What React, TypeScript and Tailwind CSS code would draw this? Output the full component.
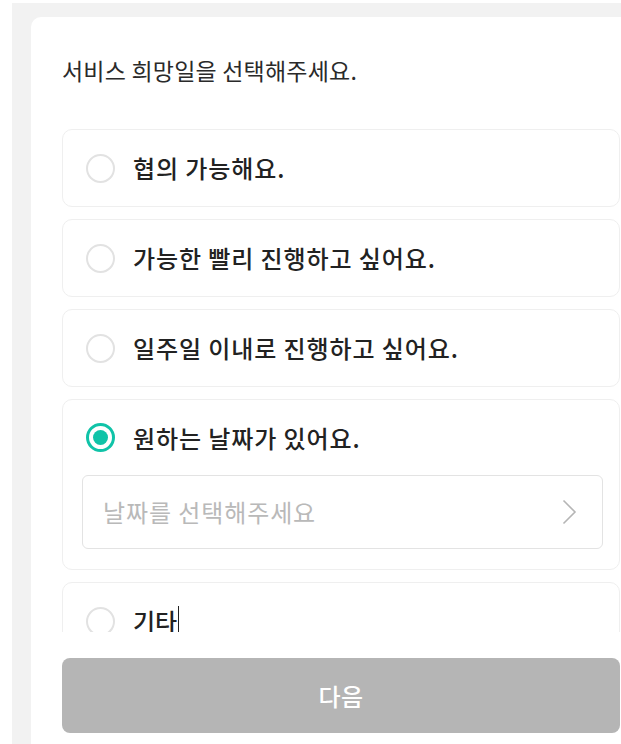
import React from "react";

const font = { fontFamily: '"Noto Sans CJK KR", "Noto Sans", sans-serif' };

function Radio({ checked }: { checked?: boolean }) {
  if (checked) {
    return (
      <span className="flex h-[29px] w-[29px] shrink-0 items-center justify-center rounded-full border-[3px] border-[#10c3a8]">
        <span className="h-[15px] w-[15px] rounded-full bg-[#10c3a8]" />
      </span>
    );
  }
  return <span className="h-[29px] w-[29px] shrink-0 rounded-full border-2 border-[#e2e2e2]" />;
}

function Option({ label }: { label: string }) {
  return (
    <div className="flex h-[78px] shrink-0 items-center rounded-[10px] border border-[#efefef] pl-[23px]">
      <Radio />
      <span className="ml-[18px] text-[24px] font-medium leading-[32px] tracking-[0.9px] text-[#222]">{label}</span>
    </div>
  );
}

export default function App() {
  return (
    <div className="relative h-[744px] w-[621px] overflow-hidden bg-white" style={font}>
      <div className="ml-[12px] mt-[3px] h-[741px] w-[700px] bg-[#f2f2f2] pl-[19px] pt-[14px]">
        <div className="flex h-full w-[620px] flex-col rounded-tl-[10px] bg-white px-[31px] pt-[38px]">
          <h1 className="text-[23px] font-normal leading-[30px] tracking-[0.2px] text-[#2a2a2a]">서비스 희망일을 선택해주세요.</h1>
          <div className="mt-[44px] flex h-[503px] flex-col gap-[12px] overflow-hidden">
            <Option label="협의 가능해요." />
            <Option label="가능한 빨리 진행하고 싶어요." />
            <Option label="일주일 이내로 진행하고 싶어요." />
            <div className="flex shrink-0 flex-col rounded-[10px] border border-[#efefef] pb-[20px]">
              <div className="flex h-[75px] items-center pl-[23px]">
                <Radio checked />
                <span className="ml-[18px] text-[24px] font-medium leading-[32px] tracking-[0.9px] text-[#222]">원하는 날짜가 있어요.</span>
              </div>
              <div className="ml-[19px] mr-[16px] flex h-[74px] items-center justify-between rounded-[6px] border border-[#e3e3e3] pl-[20px] pr-[25px]">
                <span className="text-[24px] leading-[32px] tracking-[0.9px] text-[#b9b9b9]">날짜를 선택해주세요</span>
                <svg width="15" height="26" viewBox="0 0 15 26" fill="none">
                  <polyline points="1.5,1.5 13,13 1.5,24.5" stroke="#b5b5b5" strokeWidth="1.6" />
                </svg>
              </div>
            </div>
            <div className="flex h-[78px] shrink-0 items-center rounded-[10px] border border-[#efefef] pl-[23px]">
              <Radio />
              <span className="ml-[18px] flex items-center text-[24px] font-medium leading-[32px] text-[#222]">
                기타
                <span className="ml-[1px] h-[30px] w-[1px] bg-[#222]" />
              </span>
            </div>
          </div>
          <button className="mt-[26px] flex h-[75px] w-full items-center justify-center rounded-[8px] bg-[#b5b5b5] text-[24px] font-medium tracking-[0.5px] text-white">
            다음
          </button>
        </div>
      </div>
    </div>
  );
}
